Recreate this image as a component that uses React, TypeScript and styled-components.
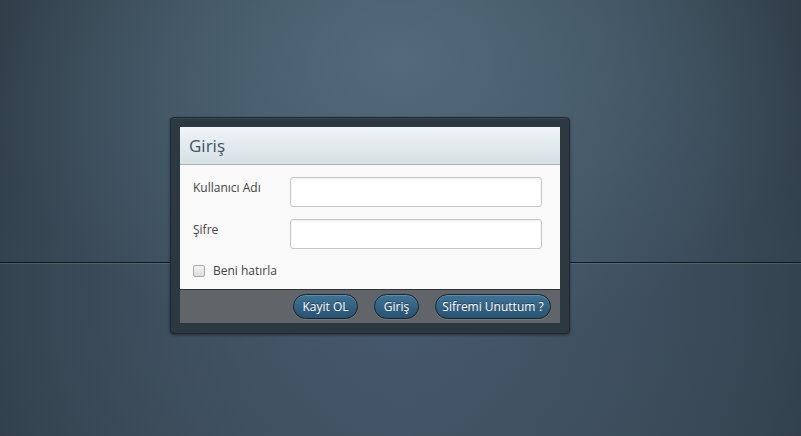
import React from 'react';
import styled, { createGlobalStyle } from 'styled-components';

const GlobalStyle = createGlobalStyle`
  html, body {
    margin: 0;
    padding: 0;
  }
  body {
    font-family: 'Open Sans', 'DejaVu Sans', sans-serif;
  }
`;

const Page = styled.div`
  width: 801px;
  height: 436px;
  box-sizing: border-box;
  padding: 117px 0 0 170px;
  overflow: hidden;
  background:
    linear-gradient(
      to bottom,
      transparent 262px,
      rgba(10, 16, 20, 0.85) 262px,
      rgba(10, 16, 20, 0.85) 263px,
      rgba(120, 140, 150, 0.35) 263px,
      rgba(120, 140, 150, 0.35) 264px,
      transparent 264px
    ),
    radial-gradient(ellipse 420px 300px at 400px 60px, #526a7a 0%, rgba(70, 90, 104, 0) 100%),
    radial-gradient(ellipse 520px 420px at 400px 300px, #45576a 0%, rgba(58, 72, 84, 0) 100%),
    linear-gradient(to right, #2f3d48 0%, #3c4d5a 50%, #2f3d48 100%);
`;

const Frame = styled.div`
  width: 400px;
  box-sizing: border-box;
  padding: 9px 10px 10px 9px;
  background: #2d3940;
  border: 1px solid #1f282e;
  border-radius: 4px;
  box-shadow: 0 1px 3px rgba(0, 0, 0, 0.45), inset 0 1px 0 rgba(255, 255, 255, 0.08);
`;

const Panel = styled.div`
  width: 380px;
  background: #f9f9f9;
`;

const Header = styled.div`
  height: 37px;
  border-bottom: 1px solid #a7b2b9;
  background: linear-gradient(to bottom, #eff4f7, #d6e0e5);
  display: flex;
  align-items: center;
  padding-left: 9px;
  font-size: 17px;
  color: #3e5262;
`;

const Body = styled.div`
  padding: 12px 18px 0 13px;
  height: 124px;
  box-sizing: border-box;
  display: flex;
  flex-direction: column;
  gap: 12px;
`;

const Row = styled.div`
  display: flex;
  align-items: flex-start;
`;

const Label = styled.label`
  width: 97px;
  padding-top: 2px;
  font-size: 12px;
  color: #444;
`;

const Input = styled.input`
  width: 252px;
  height: 30px;
  box-sizing: border-box;
  border: 1px solid #c6c6c6;
  border-radius: 3px;
  background: #fff;
  box-shadow: inset 0 1px 2px rgba(0, 0, 0, 0.08);
  outline: none;
`;

const Remember = styled.label`
  display: flex;
  align-items: center;
  gap: 8px;
  margin-top: 1px;
  font-size: 12px;
  color: #444;
`;

const Check = styled.span`
  width: 12px;
  height: 12px;
  box-sizing: border-box;
  border: 1px solid #aaa;
  border-radius: 2px;
  background: linear-gradient(to bottom, #f4f4f4, #dcdcdc);
`;

const Footer = styled.div`
  height: 34px;
  box-sizing: border-box;
  border-top: 1px solid #2c3338;
  background: #616569;
  display: flex;
  align-items: center;
  justify-content: flex-end;
  gap: 16px;
  padding: 0 9px 0 0;
`;

const Button = styled.button<{ $w: number }>`
  width: ${(p) => p.$w}px;
  height: 25px;
  padding: 0;
  border: 1px solid #17242e;
  border-radius: 13px;
  background: linear-gradient(to bottom, #3f7396, #295272);
  box-shadow: inset 0 1px 0 rgba(255, 255, 255, 0.2), 0 1px 0 rgba(255, 255, 255, 0.12);
  color: #fff;
  font-family: 'Open Sans', 'DejaVu Sans', sans-serif;
  font-size: 12px;
  text-shadow: 0 -1px 0 rgba(0, 0, 0, 0.4);
  cursor: pointer;
`;

export default function App() {
  return (
    <Page>
      <GlobalStyle />
      <Frame>
        <Panel>
          <Header>Giriş</Header>
          <Body>
            <Row>
              <Label>Kullanıcı Adı</Label>
              <Input type="text" />
            </Row>
            <Row>
              <Label>Şifre</Label>
              <Input type="password" />
            </Row>
            <Remember>
              <Check />
              Beni hatırla
            </Remember>
          </Body>
          <Footer>
            <Button $w={65}>Kayit OL</Button>
            <Button $w={45}>Giriş</Button>
            <Button $w={116}>Sifremi Unuttum ?</Button>
          </Footer>
        </Panel>
      </Frame>
    </Page>
  );
}
